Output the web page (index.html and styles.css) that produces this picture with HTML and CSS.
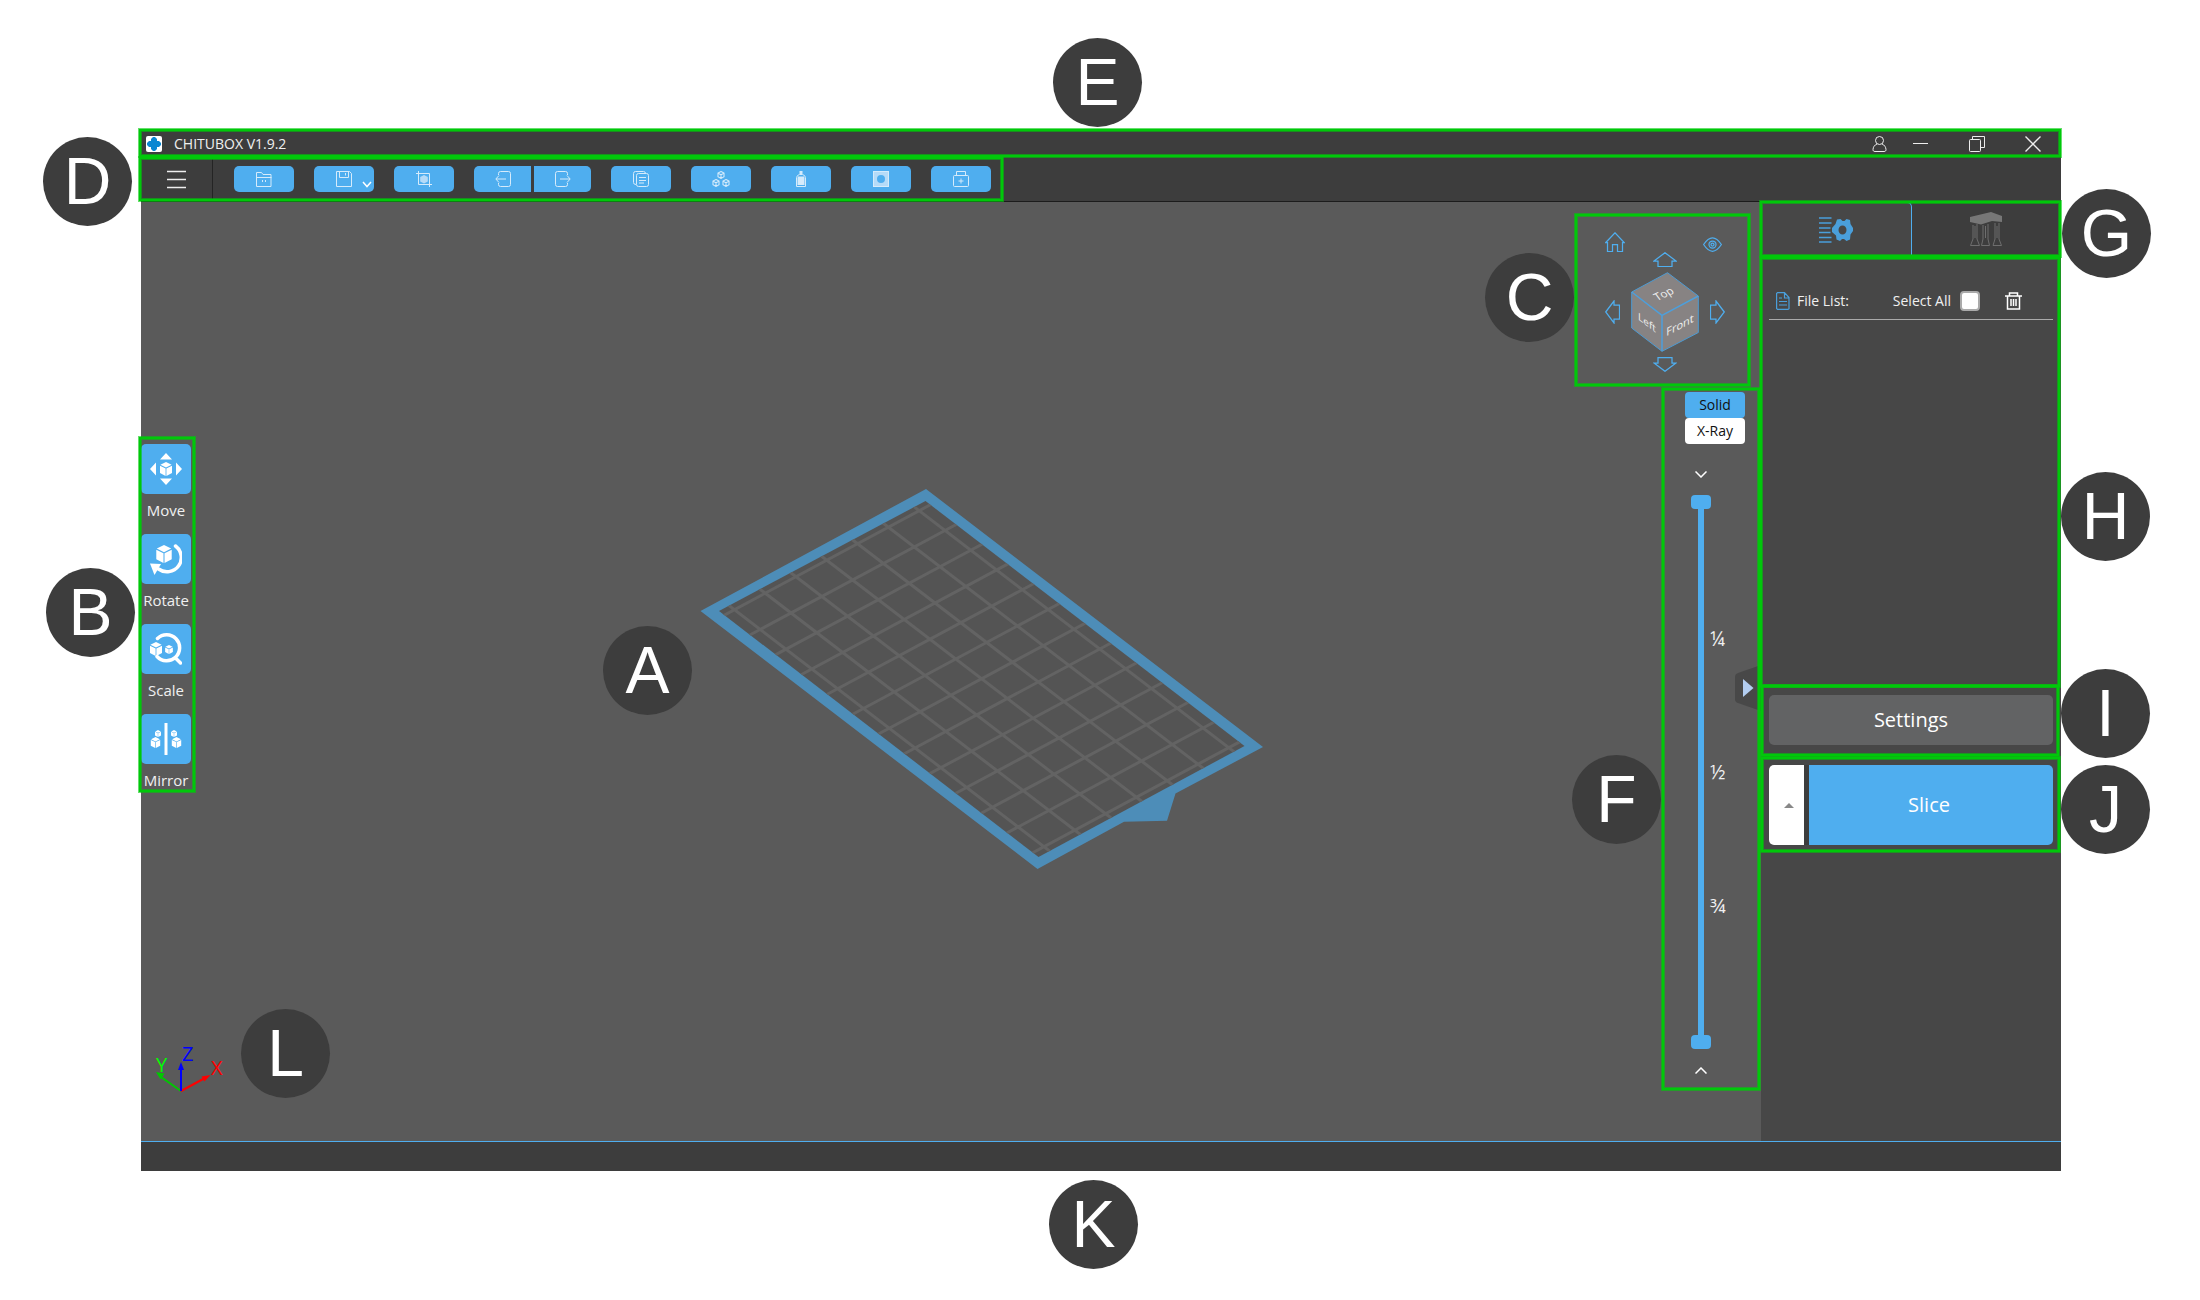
FILE: index.html
```html
<!DOCTYPE html>
<html lang="en">
<head>
<meta charset="utf-8">
<title>CHITUBOX V1.9.2</title>
<link rel="stylesheet" href="styles.css">
</head>
<body>
<svg class="defs" aria-hidden="true">
  <symbol id="cube" viewBox="0 0 12 14">
    <path fill="#fff" d="M6 0l5.600 2.800L6 5.600.4 2.800zM0 3.700l5.600 2.800V14L0 11zM12 3.700L6.400 6.500V14L12 11z"/>
  </symbol>
  <symbol id="wire-cube" viewBox="0 0 8 9">
    <path fill="none" stroke="currentColor" stroke-width="1.200" d="M4 .6l3.400 1.800v4L4 8.400.6 6.400v-4zM.6 2.400L4 4.300l3.400-1.900M4 4.300v4"/>
  </symbol>
</svg>

<div class="app">
  <header class="titlebar zone">
    <svg class="logo" viewBox="0 0 16 16" aria-hidden="true"><rect width="16" height="16" rx="2" fill="#fff"/><path fill="#0a87d2" d="M7 1h2l2 2v2h2l2 2v2l-2 2h-2v2l-2 2H7l-2-2v-2H3L1 9V7l2-2h2V3z"/></svg>
    <h1 class="app-name">CHITUBOX V1.9.2</h1>
    <div class="window-buttons">
      <button class="window-button account" aria-label="Account"><svg width="15" height="16" viewBox="0 0 15 16"><circle cx="7.500" cy="4.500" r="4"/><path d="M5 8C2.500 9 1.200 11 1 13.500c0 1.300.5 2 2 2h9c1.500 0 2-.7 2-2C13.800 11 12.500 9 10 8"/></svg></button>
      <button class="window-button" aria-label="Minimize"><svg width="16" height="16" viewBox="0 0 16 16"><path d="M0 7.500h15"/></svg></button>
      <button class="window-button" aria-label="Restore"><svg width="16" height="16" viewBox="0 0 16 16"><rect x=".5" y="3.500" width="11" height="12" rx="1"/><path d="M3.500 3.500v-3h12v11h-4"/></svg></button>
      <button class="window-button" aria-label="Close"><svg width="16" height="16" viewBox="0 0 16 16"><path stroke-width="1.400" d="M.5.500l15 15M15.500.500l-15 15"/></svg></button>
    </div>
    <span class="badge badge-e">E</span>
  </header>

  <div class="toolbar">
    <div class="tools zone">
      <button class="menu" aria-label="Menu"><svg width="20" height="19" viewBox="0 0 20 19"><path stroke="#eee" stroke-width="1.500" d="M0 1.500h19M0 9.500h19M0 17.500h19"/></svg></button>
      <div class="tool-buttons">
        <button class="tool" aria-label="Open file"><svg width="16" height="16" viewBox="0 0 16 16"><path d="M.5 15.500V1.500h5l1.500 2h8v12zM.5 6.500h15M6.500 9v2M9.500 9v2"/></svg></button>
        <button class="tool save" aria-label="Save"><svg width="16" height="16" viewBox="0 0 16 16"><path d="M.5.500h13l2 2v13H.5zM3.500.500v6h9v-6M9.500 2v2.500"/></svg><svg class="more" width="10" height="7" viewBox="0 0 10 7"><path stroke-width="1.500" d="M1 1l4 4.500L9 1"/></svg></button>
        <button class="tool" aria-label="Screenshot"><svg width="16" height="16" viewBox="0 0 16 16"><path d="M2.500 0v13.500H16M0 2.500h13.500V16"/><path class="solid" d="M8 4l3.800 2v4.500L8 12.500l-3.800-2V6z"/></svg></button>
        <div class="pair">
          <button class="tool" aria-label="Undo"><svg width="16" height="16" viewBox="0 0 16 16"><path d="M3.500 4V2.500q0-2 2-2h8q2 0 2 2v11q0 2-2 2h-8q-2 0-2-2V12M11 8H1M4 4.500L.8 8 4 11.500"/></svg></button>
          <button class="tool" aria-label="Redo"><svg width="16" height="16" viewBox="0 0 16 16"><path d="M12.500 4V2.500q0-2-2-2h-8q-2 0-2 2v11q0 2 2 2h8q2 0 2-2V12M5 8h10M12 4.500L15.200 8 12 11.500"/></svg></button>
        </div>
        <button class="tool" aria-label="Copy"><svg width="16" height="16" viewBox="0 0 16 16"><path d="M3 13.500q-2.500 0-2.500-2v-9q0-2 2-2h8q2 0 2 2"/><rect x="3.500" y="2.500" width="12" height="13" rx="2"/><path d="M6 6.500h7M6 9.500h7M6 12h5"/></svg></button>
        <button class="tool" aria-label="Automatic layout"><svg width="18" height="16" viewBox="0 0 18 16"><use href="#wire-cube" x="5" y="0" width="8" height="8"/><use href="#wire-cube" x="0" y="8" width="8" height="8"/><use href="#wire-cube" x="10" y="8" width="8" height="8"/></svg></button>
        <button class="tool" aria-label="Hollow"><svg width="16" height="16" viewBox="0 0 16 16"><path class="light" d="M6.500 0h3v3h-3zM5 5.500h6l.5 1V14h-7V6.500z"/><path d="M3.500 15.500v-9Q4 4 6.500 3.500h3q2.500.5 3 3v9z"/></svg></button>
        <button class="tool" aria-label="Dig hole"><svg width="16" height="16" viewBox="0 0 16 16"><path class="solid" fill-rule="evenodd" d="M0 0h16v16H0zM8 4a4 4 0 100 8 4 4 0 000-8z"/><rect x=".5" y=".5" width="15" height="15"/></svg></button>
        <button class="tool" aria-label="Repair"><svg width="16" height="16" viewBox="0 0 16 16"><path d="M3.500 4.500v-4h9v4M8 7.500v5M5.500 10h5"/><rect x=".5" y="4.500" width="15" height="11" rx="1"/></svg></button>
      </div>
      <span class="badge badge-d">D</span>
    </div>
  </div>

  <div class="workspace">
    <main class="viewport">
      <svg class="plate" viewBox="700 488 564 382" width="564" height="382" role="img" aria-label="Build plate">
        <defs><clipPath id="plate-inside"><path d="M719 611L925.500 501 1244.500 746 1038.500 857z"/></clipPath></defs>
        <path fill="#4d8db8" d="M700.500 611L926 489l337 258-87.500 46.500-8.500 27.300-43 .9L1037.500 869z"/>
        <path fill="#545454" d="M719 611L925.500 501 1244.500 746 1038.500 857z"/>
        <g clip-path="url(#plate-inside)">
          <path class="grid-lines" transform="matrix(25.800 19.750 -30.800 16.500 919.200 510.700)" d="M-1 0H13M-1 1H13M-1 2H13M-1 3H13M-1 4H13M-1 5H13M-1 6H13M0-1V7M1-1V7M2-1V7M3-1V7M4-1V7M5-1V7M6-1V7M7-1V7M8-1V7M9-1V7M10-1V7M11-1V7M12-1V7"/>
        </g>
      </svg>
      <span class="badge badge-a">A</span>

      <div class="transform-tools zone">
        <button class="transform"><span class="tile"><svg width="32" height="32" viewBox="0 0 32 32"><path fill="#fff" d="M16 0l6 6.500H10zM16 32l6-6.500H10zM0 16l6-6.500v13zM32 16l-6-6.500v13z"/><use href="#cube" x="10" y="9" width="12" height="14"/></svg></span>Move</button>
        <button class="transform"><span class="tile"><svg width="32" height="32" viewBox="0 0 32 32"><path fill="none" stroke="#fff" stroke-width="3.500" stroke-linecap="round" d="M25.500 3a14 14 0 01-17 23"/><path fill="#fff" d="M0 20.500l11 .5-6.500 11z"/><use href="#cube" x="6" y="2" width="16" height="18"/></svg></span>Rotate</button>
        <button class="transform"><span class="tile"><svg width="32" height="32" viewBox="0 0 32 32"><path fill="none" stroke="#fff" stroke-width="3.500" stroke-linecap="round" d="M7.500 5.500a13 13 0 11-.5 18M25.500 25l5 5"/><use href="#cube" x="0" y="9" width="12" height="14"/><use href="#cube" x="15" y="12" width="8" height="9"/></svg></span>Scale</button>
        <button class="transform"><span class="tile"><svg width="32" height="32" viewBox="0 0 32 32"><path fill="#fff" d="M14.500 0h3v32h-3z"/><use href="#cube" x="0" y="14" width="11" height="11"/><use href="#cube" x="5" y="7" width="6" height="7"/><use href="#cube" x="21" y="14" width="11" height="11"/><use href="#cube" x="21" y="7" width="6" height="7"/></svg></span>Mirror</button>
        <span class="badge badge-b">B</span>
      </div>

      <div class="view-nav zone">
        <button class="nav home" aria-label="Home view"><svg width="20" height="20" viewBox="0 0 20 20"><path d="M.8 10.500L10 .8l9.200 9.700H17.500v9H12.500v-7h-5v7h-5v-9z"/></svg></button>
        <button class="nav eye" aria-label="Projection"><svg width="19" height="15" viewBox="0 0 19 15"><path d="M.6 7.500Q9.500-6 18.400 7.500 9.500 21 .6 7.500z"/><circle cx="9.500" cy="7.500" r="3.500"/><circle cx="9.500" cy="7.500" r="1.500"/></svg></button>
        <button class="nav up" aria-label="Rotate up"><svg width="24" height="15" viewBox="0 0 24 15"><path d="M12 .7L23 9h-4v5.500H5V9H1z"/></svg></button>
        <button class="nav left" aria-label="Rotate left"><svg width="15" height="24" viewBox="0 0 15 24"><path d="M.7 12L9 1v4h5.500v14H9v4z"/></svg></button>
        <svg class="nav-cube" width="68" height="80" viewBox="0 0 68 80" role="img" aria-label="View cube">
          <path fill="#878383" stroke="#4d9bd3" d="M36.500.7L67.300 24v36.500L31 79.300.7 56V20z"/>
          <path fill="none" stroke="#4d9fdb" stroke-width="1.500" d="M.7 20L31 43.300 67.300 24M31 43.300v36"/>
          <text transform="translate(35 25) rotate(-24) skewX(12)">Top</text>
          <text transform="translate(16 54) skewY(37)" class="narrow-face">Left</text>
          <text transform="translate(49 57) skewY(-28)">Front</text>
        </svg>
        <button class="nav right" aria-label="Rotate right"><svg width="15" height="24" viewBox="0 0 15 24"><path d="M14.300 12L6 1v4H.5v14H6v4z"/></svg></button>
        <button class="nav down" aria-label="Rotate down"><svg width="24" height="15" viewBox="0 0 24 15"><path d="M12 14.300L23 6h-4V.5H5V6H1z"/></svg></button>
        <span class="badge badge-c">C</span>
      </div>

      <button class="collapse" aria-label="Collapse panel"><svg width="26" height="46" viewBox="0 0 26 46"><path fill="#484848" d="M26 0L3 8Q0 9 0 12v22q0 3 3 4l23 8z"/><path fill="#b3cdf0" d="M8 14l10.500 9L8 32z"/></svg></button>

      <div class="layer-slider zone">
        <div class="render-modes">
          <button class="mode active">Solid</button>
          <button class="mode">X-Ray</button>
        </div>
        <button class="step" aria-label="Lower top layer"><svg width="12" height="7" viewBox="0 0 12 7"><path d="M.5.500L6 6 11.500.500"/></svg></button>
        <div class="range">
          <input type="range" class="range-top" aria-label="Top layer" min="0" max="100" value="0">
          <input type="range" class="range-bottom" aria-label="Bottom layer" min="0" max="100" value="100">
          <div class="marks"><span>¼</span><span>½</span><span>¾</span></div>
        </div>
        <button class="step" aria-label="Raise bottom layer"><svg width="12" height="7" viewBox="0 0 12 7"><path d="M.5 6.500L6 1l5.500 5.500"/></svg></button>
        <span class="badge badge-f">F</span>
      </div>

      <div class="axes">
        <svg width="80" height="62" viewBox="154 1032 80 62" role="img" aria-label="Axes">
          <path stroke="#00c800" stroke-width="2" d="M181 1091l-20-14"/><path fill="#00c800" d="M156 1072l8.500 1.500-4 6z"/>
          <path stroke="#f00" stroke-width="2" d="M181 1091l24-13"/><path fill="#f00" d="M210.500 1075l-6 6.500-3-5z"/>
          <path stroke="#00f" stroke-width="2" d="M181 1091v-24"/><path fill="#00f" d="M181 1062l3 8h-6z"/>
          <text x="156" y="1072" fill="#0f0">Y</text><text x="182" y="1061" fill="#00f">Z</text><text x="211" y="1075" fill="#f00">X</text>
        </svg>
        <span class="badge badge-l">L</span>
      </div>
    </main>

    <aside class="panel">
      <div class="tabs zone">
        <button class="tab active" aria-label="Slicing"><svg width="34" height="26" viewBox="0 0 34 26"><path stroke="#4a9fdb" stroke-width="1.500" d="M0 1h12.500M0 6h12.500M0 11h11.500M0 15.500h11.500M0 20.500h12.500M0 25h12.500"/><path fill="#4a9fdb" fill-rule="evenodd" d="M18 2.500l3.500-.5 2 2h2l2-2 3.500 1 .5 4L34 11v3l-2.500 3.500-.5 5-3.500 1.500-2.500-2h-2l-2 2-3.500-1.500-.5-4L13 15v-4l3.500-4zM23.500 8.500a4 4.500 0 100 9 4 4.500 0 000-9z"/></svg></button>
        <button class="tab" aria-label="Supports"><svg width="32" height="34" viewBox="0 0 32 34"><path fill="#777" d="M0 5l21-5 11 4v6l-10-1-11 3.500L0 10z"/><path fill="none" stroke="#6e6e6e" d="M3 13v14L.5 33.500h9L7 27V12M13 13v14l-1.500 6.500h8L18 27V12M25 11v16l-2 6.500h8.500L29 27V11M5 14v12M15.500 14v12M27 14v12"/></svg></button>
        <span class="badge badge-g">G</span>
      </div>
      <section class="files zone">
        <div class="files-head">
          <svg width="14" height="18" viewBox="0 0 14 18" aria-hidden="true"><path fill="none" stroke="#4a9fdb" stroke-width="1.200" d="M1.500.6h7l4.500 5v11l-1 .8H1.500l-.9-.9v-15zM8.500.6V6H13M3 6h3M3 9.500h8M3 13h8"/></svg>
          <h2 class="files-title">File List:</h2>
          <label class="select-all">Select All <input type="checkbox" class="tick"></label>
          <button class="trash" aria-label="Delete"><svg width="17" height="18" viewBox="0 0 17 18"><path d="M0 4h17M4.500 4V1h8v3M2.500 4v13h12V4M6 7v7M8.500 7v7M11 7v7"/></svg></button>
        </div>
        <span class="badge badge-h">H</span>
      </section>
      <div class="settings-row zone">
        <button class="settings">Settings</button>
        <span class="badge badge-i">I</span>
      </div>
      <div class="slice-row zone">
        <div class="slice-group">
          <button class="slice-more" aria-label="Slice options"><svg width="10" height="5" viewBox="0 0 10 5"><path fill="#888" d="M5 0l5 5H0z"/></svg></button>
          <button class="slice">Slice</button>
        </div>
        <span class="badge badge-j">J</span>
      </div>
    </aside>
  </div>

  <footer class="statusbar"><span class="badge badge-k">K</span></footer>
</div>
</body>
</html>
```
FILE: styles.css
```css
:root {
  --bar: #3d3d3d;
  --panel: #474747;
  --canvas: #5a5a5a;
  --blue: #4faeef;
  --frame: #00c80a;
  --frame-edge: rgba(0, 200, 10, 0.6);
}

* { box-sizing: border-box; }

body {
  margin: 0;
  min-height: 100vh;
  display: flex;
  padding: 131px 139px 129px 141px;
  background: #fff;
  color: #f0f0f0;
  font: 14px/20px "Open Sans", "Noto Sans", sans-serif;
}

button {
  margin: 0;
  padding: 0;
  border: 0;
  background: none;
  color: inherit;
  font: inherit;
  cursor: pointer;
}

svg { display: block; }
.defs { position: absolute; width: 0; height: 0; }

.app {
  flex: 1;
  min-width: 0;
  display: flex;
  flex-direction: column;
}

/* Highlighted regions and their letters */
.zone { position: relative; }
.zone::after {
  content: "";
  position: absolute;
  inset: 0;
  border: 2px solid var(--frame);
  box-shadow: 0 0 0 1px var(--frame-edge), inset 0 0 0 1px var(--frame-edge);
  pointer-events: none;
}

.badge {
  position: absolute;
  z-index: 2;
  width: 89px;
  height: 89px;
  border-radius: 50%;
  background: var(--bar);
  color: #fff;
  font: 66px/89px "Liberation Sans", Arial, sans-serif;
  text-align: center;
}
.badge-a { left: calc(50% - 348px); top: calc(50% - 46px); }
.badge-b { left: -95px; top: 124px; }
.badge-c { left: -90px; top: 40px; }
.badge-d { left: -98px; top: -20px; }
.badge-e { left: calc(50% - 48px); top: -93px; }
.badge-f { left: -89px; top: 368px; }
.badge-g { left: calc(100% + 1px); top: -13px; }
.badge-h { left: 100%; top: 216px; }
.badge-i { left: 100%; top: -16px; }
.badge-j { left: 100%; top: 8px; }
.badge-k { left: calc(50% - 52px); top: 38px; }
.badge-l { left: 87px; top: -23px; }

/* Title bar */
.titlebar {
  display: flex;
  align-items: center;
  height: 26px;
  padding-left: 5px;
  background: var(--bar);
}
.titlebar::after { inset: -2px 0 0 -2px; }
.logo { width: 16px; height: 16px; }
.app-name { margin: 0 0 0 12px; font-size: 14px; font-weight: 400; }
.window-buttons { display: flex; height: 100%; margin-left: auto; }
.window-button { display: grid; place-items: center; width: 56px; }
.window-button.account { width: 28px; }
.window-button svg { fill: none; stroke: #eee; }

/* Toolbar */
.toolbar {
  display: flex;
  height: 45px;
  background: var(--bar);
  border-bottom: 1px solid #1c1c1c;
}
.tools { display: flex; padding-right: 11px; }
.tools::after { inset: 0 -1px 0 -2px; }
.menu {
  display: grid;
  place-items: center;
  width: 72px;
  border-right: 1px solid #242424;
}
.tool-buttons { display: flex; align-items: center; gap: 20px; padding-left: 21px; }
.pair { display: flex; gap: 3px; }
.tool {
  display: grid;
  place-items: center;
  position: relative;
  width: 60px;
  height: 26px;
  border-radius: 5px;
  background: var(--blue);
  color: #d5ebfb;
}
.pair .tool { width: 57px; border-radius: 5px 0 0 5px; }
.pair .tool + .tool { border-radius: 0 5px 5px 0; }
.tool svg { fill: none; stroke: #d5ebfb; }
.tool .solid { fill: #b5dbf8; stroke: none; }
.tool .light { fill: #d5ebfb; stroke: none; }
.tool .more { position: absolute; right: 2px; bottom: 4px; stroke: #fff; }

/* Work area */
.workspace { flex: 1; display: flex; }
.viewport { position: relative; flex: 1; min-width: 0; background: var(--canvas); }
.plate { position: absolute; left: calc(50% - 251px); top: calc(50% - 184px); }
.grid-lines { fill: none; stroke: #636363; stroke-width: 3; vector-effect: non-scaling-stroke; }

.transform-tools {
  position: absolute;
  left: 0;
  top: 242px;
  display: flex;
  flex-direction: column;
  gap: 14px;
}
.transform-tools::after { inset: -7px -4px -2px -2px; }
.transform { display: flex; flex-direction: column; align-items: center; gap: 6px; width: 50px; font-size: 15px; }
.tile {
  display: grid;
  place-items: center;
  width: 50px;
  height: 50px;
  border-radius: 5px;
  background: var(--blue);
}

.view-nav {
  position: absolute;
  top: 11px;
  right: 11px;
  display: grid;
  grid-template: 20px 20px 80px 20px / 20px 80px 20px;
  width: 175px;
  height: 173px;
  padding: 19px 25px 14px 30px;
}
.view-nav::after { inset: 1px 0 0; }
.nav svg { fill: none; stroke: #4faeef; stroke-width: 1.25; }
.home { grid-area: 1 / 1; }
.eye { grid-area: 1 / 3; align-self: end; justify-self: end; margin-right: 3px; }
.up { grid-area: 2 / 2; justify-self: center; align-self: start; }
.left { grid-area: 3 / 1; justify-self: start; align-self: center; }
.nav-cube { grid-area: 3 / 2; justify-self: center; }
.right { grid-area: 3 / 3; justify-self: end; align-self: center; }
.down { grid-area: 4 / 2; justify-self: center; align-self: end; }
.nav-cube text { fill: #f0f0f0; font-size: 11px; text-anchor: middle; }
.nav-cube .narrow-face { font-size: 10px; }

.collapse { position: absolute; right: 0; top: calc(50% - 7px); }

.layer-slider {
  position: absolute;
  top: 185px;
  right: 0;
  bottom: 50px;
  display: flex;
  flex-direction: column;
  align-items: center;
  width: 100px;
  padding: 5px 20px 17px 0;
}
.layer-slider::after { inset: 1px; }
.render-modes { display: flex; flex-direction: column; align-self: flex-end; margin-right: -4px; }
.mode { width: 60px; height: 26px; border-radius: 4px; background: #fff; color: #111; }
.mode.active { background: var(--blue); }
.step svg { fill: none; stroke: #fff; stroke-width: 1.5; }
.render-modes + .step { margin-top: 27px; }
.range {
  position: relative;
  flex: 1;
  display: grid;
  width: 20px;
  margin: 17px 0 18px;
  background: linear-gradient(var(--blue), var(--blue)) center / 6px 100% no-repeat;
}
.range input {
  grid-area: 1 / 1;
  appearance: none;
  writing-mode: vertical-lr;
  width: 20px;
  height: 100%;
  margin: 0;
  background: none;
  pointer-events: none;
}
.range input::-webkit-slider-runnable-track { width: 20px; background: none; }
.range input::-webkit-slider-thumb {
  appearance: none;
  width: 20px;
  height: 14px;
  border-radius: 4px;
  background: var(--blue);
  pointer-events: auto;
}
.marks {
  position: absolute;
  inset: 20px auto 20px 19px;
  display: flex;
  flex-direction: column;
  justify-content: space-evenly;
  font-size: 20px;
  line-height: 20px;
}

.axes { position: absolute; left: 13px; bottom: 47px; }
.axes text { font-size: 20px; }

/* Side panel */
.panel { width: 300px; background: var(--panel); }
.tabs { display: flex; height: 54px; background: var(--bar); }
.tabs::after { inset: -1px 0 -1px -1px; }
.tab { display: grid; place-items: center; flex: 1; }
.tab.active {
  border-top: 1px solid var(--blue);
  border-right: 1px solid var(--blue);
  border-top-right-radius: 5px;
  background: var(--panel);
}
.files { height: 429px; padding: 30px 8px 0; }
.files::after { inset: 1px 1px -2px -1px; }
.files-head {
  display: flex;
  align-items: center;
  height: 34px;
  padding: 0 31px 4px 7px;
  border-bottom: 1px solid #aaa;
}
.files-title { margin: 0 0 0 7px; font-size: 14px; font-weight: 400; }
.select-all { display: flex; align-items: center; gap: 9px; margin-left: auto; }
.tick {
  appearance: none;
  width: 20px;
  height: 20px;
  margin: 0;
  border: 2px solid #aaa;
  border-radius: 4px;
  background: #fff;
}
.trash { margin-left: 25px; }
.trash svg { fill: none; stroke: #fff; stroke-width: 1.5; }

.settings-row { padding: 10px 8px 12px; }
.settings-row::after { inset: 0 2px 1px 0; }
.settings {
  display: block;
  width: 100%;
  height: 50px;
  border-radius: 5px;
  background: #626364;
  color: #fff;
  font-size: 20px;
}
.slice-row { padding: 8px 8px 7px; }
.slice-row::after { inset: 0 1px 0 0; }
.slice-group { display: flex; height: 80px; gap: 5px; background: var(--bar); border-radius: 5px; }
.slice-more { display: grid; place-items: center; width: 35px; padding-left: 4px; border-radius: 5px 0 0 5px; background: #fff; }
.slice { flex: 1; padding-right: 4px; border-radius: 0 5px 5px 0; background: var(--blue); color: #fff; font-size: 20px; }

/* Status bar */
.statusbar {
  position: relative;
  height: 30px;
  border-top: 1px solid var(--blue);
  background: var(--bar);
}
```
